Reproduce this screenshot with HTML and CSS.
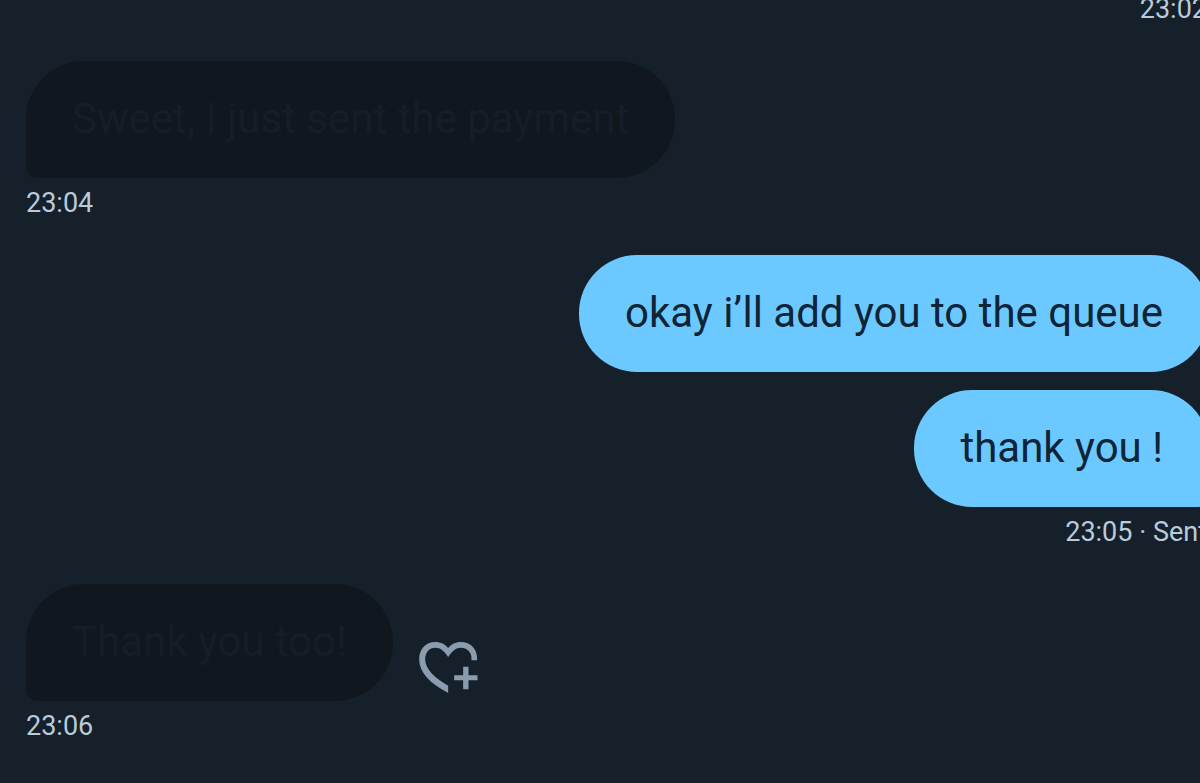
FILE: index.html
```
<!DOCTYPE html>
<html lang="en">
<head>
    <meta charset="UTF-8">
    <meta name="viewport" content="width=device-width, initial-scale=1.0">
    <title>Messages</title>
    <link rel="stylesheet" href="styles.css">
</head>
<body>
    <main class="chat">
        <section class="group sent">
            <p class="meta"><time>23:02</time></p>
        </section>

        <section class="group received">
            <div class="row">
                <p class="bubble tail">Sweet, I just sent the payment</p>
            </div>
            <p class="meta"><time>23:04</time></p>
        </section>

        <section class="group sent">
            <p class="bubble">okay i’ll add you to the queue</p>
            <p class="bubble tail">thank you !</p>
            <p class="meta"><time>23:05</time> · Sent</p>
        </section>

        <section class="group received">
            <div class="row">
                <p class="bubble tail">Thank you too!</p>
                <button class="react" type="button" aria-label="Add reaction">
                    <svg viewBox="57 53 176 153" aria-hidden="true">
                        <path d="M231 108H214V103C214 82 200 70 182 70C167 70 156 80 144 98C132 80 122 70 105 70C87 70 75 84 75 105C75 135 105 162 144 184V206C90 178 57 145 57 105C57 74 77 53 105 53C122 53 135 60 144 71C153 60 166 53 182 53C212 53 231 74 231 103Z"/>
                        <path d="M189 127H205V153H232V168H205V195H189V168H162V153H189Z"/>
                    </svg>
                </button>
            </div>
            <p class="meta"><time>23:06</time></p>
        </section>
    </main>
</body>
</html>
```
FILE: styles.css
```
* {
    margin: 0;
    padding: 0;
    box-sizing: border-box;
}

body {
    background-color: #15202a;
    color: #b9cadb;
    font-family: Roboto, 'Noto Sans', sans-serif;
    height: 100vh;
    overflow: hidden;
}

/* newest messages stay at the bottom, the right side runs past the window */
.chat {
    height: 100%;
    margin-right: -9px;
    padding: 0 0 40px 26px;
    display: flex;
    flex-direction: column;
    justify-content: flex-end;
    gap: 35px;
}

.group {
    display: flex;
    flex-direction: column;
    align-items: flex-start;
}

.sent {
    align-items: flex-end;
}

.row {
    display: flex;
    align-items: flex-end;
    gap: 24px;
}

.bubble {
    padding: 32px 46px 33px;
    border-radius: 58px;
    font-size: 42px;
    line-height: 52px;
    white-space: nowrap;
}

.bubble + .bubble {
    margin-top: 18px;
}

.sent .bubble {
    background: #6bc9ff;
    color: #0f2436;
}

.received .bubble {
    background: #10171e;
    color: #151e28;
}

.sent .tail {
    border-bottom-right-radius: 12px;
}

.received .tail {
    border-bottom-left-radius: 12px;
}

.meta {
    margin-top: 8px;
    font-size: 27px;
    line-height: 34px;
    white-space: nowrap;
}

.sent .meta {
    padding-right: 2px;
}

.react {
    margin-bottom: 8px;
    padding-left: 2px;
    background: none;
    border: none;
    cursor: pointer;
}

.react svg {
    display: block;
    width: 59px;
    height: 51px;
    fill: #8b9cae;
}
```
